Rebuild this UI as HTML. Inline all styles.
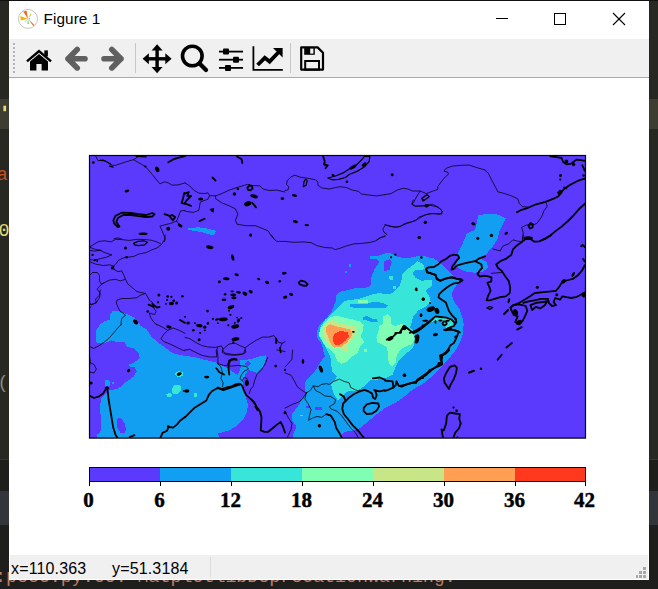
<!DOCTYPE html>
<html>
<head>
<meta charset="utf-8">
<title>Figure 1</title>
<style>
html,body{margin:0;padding:0;}
body{width:658px;height:589px;overflow:hidden;background:#272822;position:relative;font-family:"Liberation Sans",sans-serif;}
.abs{position:absolute;}
#bgl,#bgr{position:absolute;top:0;height:589px;}
#win{position:absolute;left:9px;top:1px;width:640px;height:579px;background:#fff;overflow:hidden;}
#title{position:absolute;left:34.5px;top:6px;font-size:15.3px;line-height:24px;color:#000;letter-spacing:0.1px;white-space:nowrap;}
#toolbar{position:absolute;left:0;top:38px;width:640px;height:38px;background:#f0f0f0;border-bottom:1px solid #a9a9a9;}
#status{position:absolute;left:1px;top:554px;width:638px;height:24px;background:#f0f0f0;}
#status span{position:absolute;top:4px;font-size:16px;letter-spacing:0.15px;line-height:20px;color:#000;white-space:nowrap;}
.edtxt{position:absolute;font-family:"Liberation Mono",monospace;font-size:20px;line-height:20px;white-space:nowrap;}
.cbl{font-family:"Liberation Serif",serif;font-weight:bold;font-size:21px;fill:#000;text-anchor:middle;stroke:#000;stroke-width:0.45px;}
</style>
</head>
<body>
<!-- editor background behind the window -->
<div class="abs" style="left:0;top:0;width:658px;height:1px;background:#111;"></div>
<div class="abs" style="left:0;top:99px;width:658px;height:30px;background:#3e3d32;"></div>
<div class="abs" style="left:0;top:459px;width:658px;height:32px;background:#1e1f1c;border-top:1px solid #34353a;"></div>
<div class="abs" style="left:0;top:491px;width:658px;height:34px;background:#34353a;"></div>
<div class="abs" style="left:0;top:525px;width:658px;height:64px;background:#1e1f1c;"></div>
<svg class="abs" style="left:0;top:0" width="658" height="589" viewBox="0 0 658 589">
  <rect x="3.4" y="105.7" width="2.7" height="5.5" fill="#e6db74"/>
  <g font-family="'Liberation Mono',monospace" font-size="18.3px">
    <text x="-3.2" y="179.8" fill="#c8511f">a</text>
    <text x="-1.5" y="235.5" fill="#e6db74">0</text>
    <text x="-2.5" y="388" fill="#8a8a80">(</text>
    <text x="-5" y="582.2" fill="#be7d69">:pecc.py:60: MatplotlibDeprecationWarning:</text>
  </g>
</svg>
<div id="win">
  <!-- title bar -->
  <svg class="abs" style="left:9px;top:8px" width="20" height="20" viewBox="0 0 20 20">
    <circle cx="10" cy="9.9" r="9.5" fill="#fff" stroke="#bdbdbd" stroke-width="0.9"/>
    <path d="M10 10 L5.2 2.6 L8.6 1.8 Z" fill="#f26a1b"/>
    <path d="M10 10 L2.4 7 L2.8 11.4 Z" fill="#f7b500"/>
    <path d="M10 10 L16.5 16 L15.3 17 Z" fill="#ee6a1c"/>
    <path d="M10 10 L12.5 4.5 L13.7 5.3 Z" fill="#b5d33a"/>
    <path d="M10 10 L9.2 15 L11 15 Z" fill="#7edc6e"/>
    <path d="M10 10 L6.5 12.5 L7.2 13.2 Z" fill="#8fd6d0"/>
    <path d="M10 10 L12 9.3 L12 10.3 Z" fill="#4a78c8"/>
  </svg>
  <div id="title">Figure 1</div>
  <svg class="abs" style="left:480px;top:0" width="160" height="38" viewBox="0 0 160 38">
    <g stroke="#000" stroke-width="1" fill="none" shape-rendering="crispEdges">
      <line x1="7" y1="17.5" x2="19" y2="17.5"/>
      <rect x="65.5" y="12.5" width="11" height="11"/>
    </g>
    <g stroke="#000" stroke-width="1.1" fill="none">
      <line x1="124" y1="12" x2="136" y2="24"/>
      <line x1="136" y1="12" x2="124" y2="24"/>
    </g>
  </svg>

  <!-- toolbar -->
  <div id="toolbar">
    <svg class="abs" style="left:0;top:0" width="640" height="38" viewBox="0 0 640 38">
      <!-- handle -->
      <g fill="#b4b4b4">
        <rect x="4" y="4" width="2" height="2"/><rect x="4" y="8" width="2" height="2"/><rect x="4" y="12" width="2" height="2"/><rect x="4" y="16" width="2" height="2"/><rect x="4" y="20" width="2" height="2"/><rect x="4" y="24" width="2" height="2"/><rect x="4" y="28" width="2" height="2"/><rect x="4" y="32" width="2" height="2"/>
      </g>
      <!-- home -->
      <g fill="#000">
        <path d="M17.2 21.5 L30 10.6 L42.8 21.5 L41.3 23.2 L30 13.8 L18.7 23.2 Z"/>
        <path d="M21 22.5 L30 15 L39 22.5 V31.5 H32.6 V25 H27.4 V31.5 H21 Z"/>
        <rect x="35.3" y="11.4" width="3.6" height="6"/>
      </g>
      <!-- back / forward -->
      <g stroke="#606060" stroke-width="5.6" stroke-linecap="round" stroke-linejoin="round" fill="none">
        <path d="M76 19.7 H59 M68.2 10.5 L59 19.7 L68.2 28.9"/>
        <path d="M95 19.7 H112 M102.8 10.5 L112 19.7 L102.8 28.9"/>
      </g>
      <!-- separators -->
      <rect x="126" y="4" width="1" height="30" fill="#c6c6c6"/>
      <rect x="281" y="4" width="1" height="30" fill="#c6c6c6"/>
      <!-- move -->
      <g fill="#000">
        <rect x="146.4" y="10" width="3.4" height="20"/>
        <rect x="138" y="18.1" width="20" height="3.4"/>
        <path d="M148.1 5.3 L153.6 11.6 H142.6 Z"/>
        <path d="M148.1 34.3 L153.6 28 H142.6 Z"/>
        <path d="M133.6 19.8 L139.9 14.3 V25.3 Z"/>
        <path d="M162.6 19.8 L156.3 14.3 V25.3 Z"/>
      </g>
      <!-- zoom -->
      <g stroke="#000" fill="none">
        <circle cx="183.3" cy="17" r="9.8" stroke-width="3.6"/>
        <path d="M190.5 24.5 L197 31" stroke-width="4.2" stroke-linecap="round"/>
      </g>
      <!-- sliders -->
      <g fill="#000">
        <rect x="210" y="11.7" width="24" height="1.8"/>
        <rect x="210" y="19.8" width="24" height="1.8"/>
        <rect x="210" y="28" width="24" height="1.8"/>
        <rect x="214" y="9.6" width="6" height="6" rx="1"/>
        <rect x="224" y="17.7" width="6" height="6" rx="1"/>
        <rect x="216" y="25.9" width="6" height="6" rx="1"/>
      </g>
      <!-- chart -->
      <g>
        <path d="M244.4 7.3 V30.8 H273.8" stroke="#000" stroke-width="1.8" fill="none"/>
        <path d="M248.6 26 L255.8 18.8 L260.6 22.6 L269.5 13.2" stroke="#000" stroke-width="3.8" fill="none"/>
        <path d="M264 9 H273.6 V18.6 Z" fill="#000"/>
      </g>
      <!-- save -->
      <g>
        <path d="M292.2 8.4 H308.6 L314 13.8 V30.6 H292.2 Z" fill="none" stroke="#000" stroke-width="2.2" stroke-linejoin="round"/>
        <rect x="295.2" y="8.4" width="10.6" height="7.4" fill="#000"/>
        <rect x="301.2" y="9.6" width="3.2" height="5" fill="#f0f0f0"/>
        <rect x="296.2" y="22" width="13.8" height="8.6" fill="none" stroke="#000" stroke-width="2"/>
      </g>
    </svg>
  </div>

  <!-- figure canvas -->
  <svg id="fig" class="abs" style="left:0;top:77px" width="640" height="477" viewBox="9 78 640 477">
    <defs><clipPath id="axclip"><rect x="89.5" y="155.5" width="496" height="282.6"/></clipPath></defs>
    <rect x="89.5" y="155.5" width="496" height="282.6" fill="#5b39fd"/>
    <g id="map" clip-path="url(#axclip)">
    <g shape-rendering="crispEdges">
<polygon fill="#129ff1" points="95.9,342.4 96.4,330.3 99.4,325.3 104.0,321.2 110.1,319.6 110.1,315.1 113.1,310.5 119.2,311.3 127.6,314.3 135.2,318.1 140.5,325.7 146.6,329.5 151.9,337.1 157.9,342.4 165.5,347.8 172.4,353.1 185.0,356.1 194.1,356.9 204.8,359.9 215.4,362.2 221.7,365.3 228.0,368.5 237.8,375.2 240.8,367.5 240.0,359.5 246.2,359.9 253.8,358.4 261.5,355.8 265.7,355.4 266.0,359.2 263.7,365.3 260.7,369.1 256.9,372.9 252.3,371.4 248.5,369.9 245.5,374.0 243.5,380.6 242.8,388.2 245.4,395.9 247.7,403.5 247.4,411.2 243.9,418.8 237.0,425.7 229.3,430.3 221.7,432.6 217.4,432.9 220.9,439.0 96.9,439.0 97.2,434.5 100.2,433.0 101.0,426.9 100.2,405.6 101.0,398.0 109.3,390.4 113.1,389.6 117.7,388.9 126.0,382.0 133.6,376.7 136.7,371.4 135.0,367.5 130.0,367.0 129.0,364.5 133.0,363.0 137.4,360.0 139.7,357.6 139.0,353.8 133.6,348.5 126.0,346.2 125.3,342.4 117.7,342.4 111.6,340.2 104.8,343.2"/>
<polygon fill="#5b39fd" points="116.5,420.0 119.0,417.8 122.0,419.0 125.0,424.0 126.0,430.0 124.0,433.5 120.5,433.0 117.5,428.0"/>
<polygon fill="#5b39fd" points="244.3,363.8 247.7,360.7 251.0,363.8 247.7,366.8"/>
<polygon fill="#129ff1" points="104.8,380.0 109.0,379.8 110.0,383.0 109.5,385.8 105.0,385.8"/>
<polygon fill="#129ff1" points="112.0,382.0 113.5,382.0 113.5,384.0 112.0,384.0"/>
<polygon fill="#37e6d8" points="173.0,386.0 177.0,384.3 181.0,386.0 181.5,390.0 178.0,394.0 173.5,394.2 171.6,391.0"/>
<polygon fill="#37e6d8" points="166.3,394.5 170.0,392.7 172.4,394.5 170.5,397.2 167.0,397.2"/>
<polygon fill="#37e6d8" points="175.4,373.0 179.0,371.0 183.0,372.5 182.5,376.0 178.5,377.0 175.6,376.0"/>
<polygon fill="#37e6d8" points="194.0,393.0 196.5,393.0 197.0,397.0 194.5,397.2"/>
<polygon fill="#129ff1" points="186.0,228.7 198.2,227.2 205.9,228.3 215.8,230.6 215.0,234.4 211.2,234.9 201.3,232.1 190.6,230.3"/>
<polygon fill="#129ff1" points="478.3,215.3 488.2,213.5 495.9,213.8 505.8,218.3 502.8,224.5 499.7,230.6 497.4,239.8 492.0,247.4 486.7,253.5 480.6,258.9 486.7,261.9 488.2,267.3 482.9,271.9 474.5,272.6 466.8,271.9 459.2,268.8 455.4,264.2 459.2,258.9 457.6,253.5 461.5,245.9 466.8,233.6 475.2,229.8 476.8,222.9"/>
<polygon fill="#129ff1" points="292.6,439.0 293.4,434.1 296.5,426.5 291.9,420.3 291.9,414.2 298.8,405.0 304.9,394.3 305.6,380.6 314.1,372.9 319.4,363.8 324.8,356.1 323.2,351.5 322.5,346.9 320.9,342.3 317.9,339.2 316.8,334.6 317.4,330.0 319.4,325.5 323.2,320.9 327.8,316.3 331.6,311.7 333.9,305.6 336.2,300.2 335.7,296.4 339.5,291.8 348.9,289.9 356.6,287.8 364.3,288.2 370.4,286.0 371.7,276.0 374.9,268.5 379.5,261.6 376.5,259.3 369.6,258.6 369.6,255.5 379.5,255.5 385.6,253.2 391.1,253.5 398.8,257.3 407.9,258.1 415.6,256.6 423.2,255.8 429.3,257.5 433.4,258.2 440.7,263.1 448.0,270.4 454.0,276.5 461.3,278.9 456.5,285.0 452.8,291.0 451.5,294.9 454.6,302.5 459.2,308.6 462.2,316.3 463.7,323.9 463.0,333.1 460.7,340.7 456.9,348.4 452.3,354.5 446.9,360.6 441.6,366.8 432.4,376.0 423.2,383.6 412.5,389.8 403.3,397.4 394.2,403.5 385.0,408.0 376.7,414.2 367.6,421.9 359.9,428.0 352.3,431.0 344.6,431.8 341.6,434.9 340.0,439.0"/>
<polygon fill="#5b39fd" points="384.0,261.0 390.0,259.0 391.7,262.0 389.5,270.0 384.2,271.0 383.5,266.0"/>
<polygon fill="#5b39fd" points="314.8,407.3 321.7,407.3 321.7,409.6 314.8,409.6"/>
<polygon fill="#5b39fd" points="306.4,405.8 309.5,405.8 309.5,408.1 306.4,408.1"/>
<polygon fill="#129ff1" points="348.7,263.5 350.7,263.5 350.7,267.0 348.7,267.0"/>
<polygon fill="#129ff1" points="345.0,271.0 347.0,271.0 347.0,273.0 345.0,273.0"/>
<polygon fill="#37e6d8" points="331.0,365.0 330.5,357.6 328.0,351.5 323.6,343.8 318.8,336.2 320.4,327.0 324.8,320.1 330.9,314.8 333.9,311.7 339.3,306.3 344.0,301.0 351.2,299.9 361.2,298.3 371.9,294.5 379.5,293.0 385.6,294.5 392.6,293.3 398.8,287.2 401.4,281.5 401.8,274.9 407.9,268.8 414.0,264.2 417.9,261.2 423.2,264.2 424.8,268.8 421.7,270.3 415.6,269.6 412.5,273.4 415.6,278.0 421.7,281.0 427.8,279.5 432.4,280.5 432.5,285.6 425.5,290.3 429.3,296.4 430.9,302.5 426.3,306.3 418.6,310.2 413.3,316.3 411.8,322.4 410.0,327.0 414.5,333.1 415.6,340.7 412.5,348.4 404.9,354.5 399.5,359.5 397.0,364.0 395.7,366.8 392.6,374.5 385.0,378.3 376.7,379.8 370.6,379.8 364.5,385.9 356.9,391.3 349.2,390.5 343.9,394.3 337.8,400.5 333.9,394.3 330.9,384.4 337.0,376.8 332.4,371.4"/>
<polygon fill="#37e6d8" points="388.7,276.0 393.3,276.0 393.3,279.0 388.7,279.0"/>
<polygon fill="#37e6d8" points="393.0,286.0 396.0,286.0 396.0,289.0 393.0,289.0"/>
<polygon fill="#37e6d8" points="390.0,276.5 393.0,276.5 393.0,279.5 390.0,279.5"/>
<polygon fill="#37e6d8" points="421.7,326.2 430.9,319.3 435.5,315.5 443.1,317.0 452.3,320.9 453.0,325.5 446.2,327.8 441.6,320.9 433.9,320.9 423.2,327.8"/>
<polygon fill="#37e6d8" points="300.0,414.5 303.0,414.5 303.0,416.0 300.0,416.0"/>
<polygon fill="#129ff1" points="350.0,303.6 358.0,304.3 367.7,303.6 374.4,301.5 382.6,302.9 388.0,305.6 385.3,307.7 377.2,308.3 367.7,307.7 358.0,308.3 350.0,307.0"/>
<polygon fill="#129ff1" points="362.9,317.8 366.3,315.8 371.7,318.5 377.2,319.2 377.8,321.9 373.8,322.6 367.7,320.6 363.6,319.9"/>
<polygon fill="#80ffb4" points="318.9,334.6 320.9,327.8 325.5,321.6 330.9,317.0 337.0,315.5 344.6,317.8 352.3,319.3 359.9,321.6 363.7,324.7 363.0,330.8 360.7,336.2 364.5,342.3 360.7,345.3 357.6,353.0 350.7,357.6 346.2,362.2 341.6,363.7 337.0,360.6 334.7,354.5 330.9,349.9 325.5,346.1 322.5,340.7"/>
<polygon fill="#80ffb4" points="382.6,316.5 387.4,314.4 390.7,317.2 391.4,324.0 395.5,326.0 401.6,324.0 405.0,325.3 409.8,330.7 413.8,334.8 414.5,340.3 411.1,344.3 404.3,347.0 400.3,349.8 396.9,355.2 395.5,363.3 392.1,366.1 388.7,363.3 388.0,353.8 386.7,347.0 381.9,344.3 377.2,342.3 376.5,337.5 378.5,330.7 379.2,326.0 383.3,324.0"/>
<polygon fill="#80ffb4" points="358.0,300.2 367.7,300.2 367.7,302.9 358.0,302.9"/>
<polygon fill="#80ffb4" points="364.0,348.7 367.0,348.7 367.0,351.7 364.0,351.7"/>
<polygon fill="#c8e688" points="322.5,327.0 327.8,322.4 332.4,320.1 337.0,322.4 346.2,324.7 354.6,326.2 356.9,330.8 355.3,334.6 352.3,339.2 347.7,345.3 347.7,350.7 343.9,351.5 340.8,348.4 333.2,348.4 329.3,344.6 325.5,339.2 322.5,333.1"/>
<polygon fill="#ff9f54" points="326.3,327.0 330.1,324.2 335.5,326.2 343.1,327.8 350.0,329.3 352.3,333.9 350.7,337.7 346.9,342.3 341.6,346.9 333.9,347.6 330.1,343.0 327.8,336.2 326.0,331.6"/>
<polygon fill="#ff391d" points="333.2,336.2 335.5,333.1 340.8,330.8 347.7,332.3 348.9,336.2 345.4,340.7 340.0,344.6 334.7,344.6 333.2,340.7"/>
</g>
    <path d="M95.7 156.1 L98.0 160.7 L103.3 159.9 L107.9 162.2 L111.8 165.3 L115.6 165.3 L124.8 162.2 L133.9 159.5 L137.8 156.9 L137.0 155.4" fill="none" stroke="#000" stroke-width="0.75" stroke-linejoin="round" stroke-linecap="round"/>
<path d="M100.3 160.4 L104.1 160.7 L107.9 162.5 L111.0 164.5" fill="none" stroke="#000" stroke-width="1.20" stroke-linejoin="round" stroke-linecap="round"/>
<path d="M109.5 166.1 L113.3 167.1" fill="none" stroke="#000" stroke-width="1.20" stroke-linejoin="round" stroke-linecap="round"/>
<path d="M136.2 156.4 L146.2 156.9" fill="none" stroke="#000" stroke-width="1.20" stroke-linejoin="round" stroke-linecap="round"/>
<path d="M133.9 159.9 L145.4 166.5 L152.3 174.5 L159.9 183.9 L164.5 181.8 L168.3 182.9 L172.2 185.2 L178.3 184.9 L185.0 182.9" fill="none" stroke="#000" stroke-width="0.75" stroke-linejoin="round" stroke-linecap="round"/>
<path d="M185.0 210.4 L180.6 210.9 L176.7 221.1 L179.8 224.9" fill="none" stroke="#000" stroke-width="0.75" stroke-linejoin="round" stroke-linecap="round"/>
<path d="M176.7 221.1 L170.6 223.4 L164.5 224.9 L159.9 226.1 L162.2 231.0 L165.3 238.7 L164.5 241.7" fill="none" stroke="#000" stroke-width="0.75" stroke-linejoin="round" stroke-linecap="round"/>
<ellipse cx="157.2" cy="169.4" rx="2.0" ry="2.9" fill="#000" transform="rotate(-25 157.2 169.4)"/>
<ellipse cx="145.4" cy="166.5" rx="1.1" ry="1.1" fill="#000" transform="rotate(0 145.4 166.5)"/>
<path d="M168.3 162.2 L173.7 159.2 L179.8 157.3 L185.0 156.1" fill="none" stroke="#000" stroke-width="1.80" stroke-linejoin="round" stroke-linecap="round"/>
<ellipse cx="127.0" cy="191.0" rx="2.4" ry="1.3" fill="#000" transform="rotate(-15 127.0 191.0)"/>
<ellipse cx="93.4" cy="162.5" rx="1.3" ry="1.3" fill="#000" transform="rotate(0 93.4 162.5)"/>
<ellipse cx="143.1" cy="233.8" rx="4.6" ry="1.3" fill="#000" transform="rotate(0 143.1 233.8)"/>
<ellipse cx="168.3" cy="228.7" rx="2.0" ry="2.0" fill="#000" transform="rotate(0 168.3 228.7)"/>
<path d="M164.5 214.2 L169.1 215.7 L172.9 220.3 L175.2 217.3 L172.2 215.0 L169.4 216.1" fill="none" stroke="#000" stroke-width="1.80" stroke-linejoin="round" stroke-linecap="round"/>
<path d="M184.4 192.8 L182.9 198.9 L181.6 203.2 L185.0 203.8" fill="none" stroke="#000" stroke-width="1.80" stroke-linejoin="round" stroke-linecap="round"/>
<ellipse cx="180.1" cy="225.5" rx="2.6" ry="1.5" fill="#000" transform="rotate(30 180.1 225.5)"/>
<path d="M113.3 220.3 L115.6 215.7 L121.7 212.7 L130.9 213.0 L138.5 214.2 L146.2 215.0 L152.3 213.0 L154.6 214.2 L152.3 216.5 L146.2 217.0 L138.5 216.1 L130.9 215.0 L123.2 215.0 L117.9 218.0 L116.3 221.9 L119.4 226.5 L117.9 227.2 L114.1 223.4 L113.3 220.3" fill="none" stroke="#000" stroke-width="1.80" stroke-linejoin="round" stroke-linecap="round"/>
<path d="M114.1 238.7 L117.9 237.9 L121.7 239.1" fill="none" stroke="#000" stroke-width="0.75" stroke-linejoin="round" stroke-linecap="round"/>
<path d="M185.0 182.9 L189.6 185.9 L194.2 190.5 L198.8 193.1 L204.9 193.6 L207.9 192.8 L209.5 195.6 L215.6 195.9 L221.7 193.6 L229.3 190.1 L237.0 187.5 L244.6 185.2 L247.7 184.4 L252.3 185.5 L259.9 185.9 L263.0 189.0 L269.1 190.5 L276.7 190.1 L285.0 192.0" fill="none" stroke="#000" stroke-width="0.75" stroke-linejoin="round" stroke-linecap="round"/>
<path d="M215.6 195.9 L215.6 198.6 L221.7 202.8 L229.3 205.8 L235.5 208.9 L237.8 214.2 L235.5 220.3 L237.0 224.2 L246.2 225.7 L255.3 225.7 L263.0 228.7 L268.3 231.0 L270.6 234.9 L275.2 240.1" fill="none" stroke="#000" stroke-width="0.75" stroke-linejoin="round" stroke-linecap="round"/>
<path d="M185.0 211.2 L193.4 212.4 L198.8 210.4 L200.3 202.0 L207.9 199.2 L209.5 195.6" fill="none" stroke="#000" stroke-width="0.75" stroke-linejoin="round" stroke-linecap="round"/>
<path d="M237.0 156.4 L241.6 159.2 L242.3 163.0" fill="none" stroke="#000" stroke-width="1.80" stroke-linejoin="round" stroke-linecap="round"/>
<path d="M212.5 177.5 L215.6 180.6" fill="none" stroke="#000" stroke-width="1.80" stroke-linejoin="round" stroke-linecap="round"/>
<path d="M247.4 187.9 L249.2 185.5 L252.0 185.9 L252.6 188.5 L250.4 190.4 L248.0 189.8 L247.4 187.9" fill="none" stroke="#000" stroke-width="1.80" stroke-linejoin="round" stroke-linecap="round"/>
<ellipse cx="237.8" cy="189.0" rx="1.3" ry="1.3" fill="#000" transform="rotate(0 237.8 189.0)"/>
<ellipse cx="234.4" cy="194.0" rx="1.7" ry="1.7" fill="#000" transform="rotate(0 234.4 194.0)"/>
<ellipse cx="254.1" cy="196.3" rx="4.0" ry="1.8" fill="#000" transform="rotate(15 254.1 196.3)"/>
<ellipse cx="247.7" cy="203.8" rx="3.7" ry="2.4" fill="#000" transform="rotate(-20 247.7 203.8)"/>
<path d="M252.3 202.8 L256.1 207.3" fill="none" stroke="#000" stroke-width="1.80" stroke-linejoin="round" stroke-linecap="round"/>
<ellipse cx="282.4" cy="198.6" rx="1.8" ry="1.3" fill="#000" transform="rotate(0 282.4 198.6)"/>
<ellipse cx="200.7" cy="198.9" rx="2.6" ry="1.5" fill="#000" transform="rotate(0 200.7 198.9)"/>
<path d="M185.0 193.6 L188.8 192.0 L187.3 195.9 L191.1 195.9 L186.5 200.5 L185.0 202.8" fill="none" stroke="#000" stroke-width="1.80" stroke-linejoin="round" stroke-linecap="round"/>
<path d="M185.0 203.5 L191.1 205.8" fill="none" stroke="#000" stroke-width="1.80" stroke-linejoin="round" stroke-linecap="round"/>
<polygon points="209.5,208.9 214.1,208.1 213.7,212.7 211.0,211.2" fill="#000"/>
<path d="M199.5 221.1 L204.6 218.8" fill="none" stroke="#000" stroke-width="1.80" stroke-linejoin="round" stroke-linecap="round"/>
<ellipse cx="250.7" cy="234.9" rx="1.5" ry="1.5" fill="#000" transform="rotate(0 250.7 234.9)"/>
<path d="M285.0 190.5 L288.1 189.8 L288.8 186.7 L286.5 184.4 L287.3 180.6 L291.1 176.8 L294.9 175.2 L300.3 177.2 L307.9 178.3 L315.6 179.8 L317.9 182.1 L317.9 185.2 L321.7 187.9 L329.3 189.0 L335.5 187.5 L340.0 186.7 L346.2 187.5 L352.3 190.1 L358.4 191.3 L361.5 194.0 L369.1 195.1 L376.7 195.9 L385.0 194.6" fill="none" stroke="#000" stroke-width="0.75" stroke-linejoin="round" stroke-linecap="round"/>
<path d="M327.8 178.0 L335.5 176.0 L343.1 172.9 L349.2 169.1 L356.9 164.5 L361.5 159.9 L364.5 156.4 L369.9 156.4 L369.1 161.5 L364.5 166.8 L356.9 171.4 L349.2 174.5 L345.4 177.5 L338.5 179.4 L332.4 179.8 L327.8 178.0" fill="none" stroke="#000" stroke-width="1.20" stroke-linejoin="round" stroke-linecap="round"/>
<ellipse cx="353.0" cy="167.1" rx="4.0" ry="1.7" fill="#000" transform="rotate(-30 353.0 167.1)"/>
<ellipse cx="364.1" cy="164.5" rx="2.9" ry="1.5" fill="#000" transform="rotate(-40 364.1 164.5)"/>
<ellipse cx="333.2" cy="175.2" rx="1.8" ry="1.1" fill="#000" transform="rotate(30 333.2 175.2)"/>
<path d="M303.3 186.7 L304.1 181.3 L305.6 179.1 L307.2 180.6 L306.1 185.2 L303.3 186.7" fill="none" stroke="#000" stroke-width="1.20" stroke-linejoin="round" stroke-linecap="round"/>
<path d="M323.2 156.4 L324.8 161.5 L324.0 164.5 L327.8 165.3 L325.5 168.3" fill="none" stroke="#000" stroke-width="1.80" stroke-linejoin="round" stroke-linecap="round"/>
<ellipse cx="346.9" cy="181.8" rx="1.3" ry="1.3" fill="#000" transform="rotate(0 346.9 181.8)"/>
<ellipse cx="294.5" cy="195.6" rx="2.6" ry="1.3" fill="#000" transform="rotate(15 294.5 195.6)"/>
<ellipse cx="295.4" cy="221.6" rx="2.6" ry="1.5" fill="#000" transform="rotate(15 295.4 221.6)"/>
<ellipse cx="306.7" cy="225.2" rx="2.2" ry="1.1" fill="#000" transform="rotate(0 306.7 225.2)"/>
<path d="M376.7 240.1 L379.8 237.9 L385.0 236.4" fill="none" stroke="#000" stroke-width="0.75" stroke-linejoin="round" stroke-linecap="round"/>
<path d="M385.0 225.7 L382.9 228.7 L383.6 231.8 L385.0 232.6" fill="none" stroke="#000" stroke-width="0.75" stroke-linejoin="round" stroke-linecap="round"/>
<path d="M385.0 194.6 L391.1 193.6 L397.2 190.1 L403.3 188.2 L407.9 189.0 L412.5 191.0 L420.2 191.0 L426.3 193.6 L432.4 191.3 L437.8 189.4 L437.8 186.7 L441.6 181.3 L445.4 176.8 L448.5 174.2 L447.7 172.2 L443.9 171.1 L446.2 168.3 L452.3 166.1 L461.5 165.3 L469.1 165.0 L476.7 167.6 L485.0 169.9" fill="none" stroke="#000" stroke-width="0.75" stroke-linejoin="round" stroke-linecap="round"/>
<path d="M420.2 191.0 L417.1 195.9 L413.3 202.8 L411.8 204.3 L414.8 206.3 L421.7 205.8 L426.3 205.0 L432.4 204.3 L438.5 207.3 L442.3 211.2 L441.6 214.2 L437.0 213.9 L430.9 213.5 L424.8 215.0 L418.6 217.3 L415.6 220.3 L409.5 222.6 L404.9 223.4 L400.3 226.5 L394.2 227.2 L385.0 225.2" fill="none" stroke="#000" stroke-width="0.75" stroke-linejoin="round" stroke-linecap="round"/>
<path d="M421.7 198.6 L427.0 194.6 L429.3 196.6 L424.0 200.5 L421.7 198.6" fill="none" stroke="#000" stroke-width="1.20" stroke-linejoin="round" stroke-linecap="round"/>
<ellipse cx="426.6" cy="205.8" rx="2.2" ry="1.5" fill="#000" transform="rotate(0 426.6 205.8)"/>
<ellipse cx="392.2" cy="174.8" rx="1.5" ry="1.5" fill="#000" transform="rotate(0 392.2 174.8)"/>
<ellipse cx="425.5" cy="222.2" rx="1.5" ry="1.5" fill="#000" transform="rotate(0 425.5 222.2)"/>
<ellipse cx="419.4" cy="237.6" rx="1.5" ry="1.5" fill="#000" transform="rotate(0 419.4 237.6)"/>
<ellipse cx="473.4" cy="223.9" rx="2.2" ry="1.3" fill="#000" transform="rotate(15 473.4 223.9)"/>
<ellipse cx="477.8" cy="238.4" rx="1.0" ry="0.9" fill="#000" transform="rotate(0 477.8 238.4)"/>
<path d="M385.0 233.3 L386.5 234.1" fill="none" stroke="#000" stroke-width="0.75" stroke-linejoin="round" stroke-linecap="round"/>
<path d="M485.0 170.4 L488.2 173.1 L492.2 181.1 L496.2 188.3 L497.8 191.8 L504.1 193.4 L510.5 195.5 L517.7 198.7 L519.3 203.5 L522.5 206.6 L528.1 207.1" fill="none" stroke="#000" stroke-width="0.75" stroke-linejoin="round" stroke-linecap="round"/>
<path d="M516.9 212.2 L521.7 209.8 L528.1 207.8 L536.1 204.3 L545.6 201.9 L553.6 198.7 L558.4 196.3 L560.8 192.3 L564.8 188.3 L571.2 184.3 L579.1 180.3 L585.2 178.4" fill="none" stroke="#000" stroke-width="1.80" stroke-linejoin="round" stroke-linecap="round"/>
<path d="M558.1 192.8 L560.0 190.7 L561.9 191.8 L560.3 194.4 L558.1 192.8" fill="none" stroke="#000" stroke-width="1.80" stroke-linejoin="round" stroke-linecap="round"/>
<path d="M564.0 187.5 L566.4 188.3" fill="none" stroke="#000" stroke-width="1.80" stroke-linejoin="round" stroke-linecap="round"/>
<path d="M546.4 203.5 L547.2 206.6 L544.0 210.6 L541.6 217.0 L536.9 223.4 L532.9 225.0 L526.5 225.0 L521.7 227.4 L523.3 233.0 L522.5 240.0" fill="none" stroke="#000" stroke-width="0.75" stroke-linejoin="round" stroke-linecap="round"/>
<path d="M528.4 225.8 L530.5 223.1 L532.9 224.2 L532.6 227.4 L530.0 228.5 L528.4 225.8" fill="none" stroke="#000" stroke-width="1.80" stroke-linejoin="round" stroke-linecap="round"/>
<path d="M585.2 203.5 L579.1 209.0 L573.6 215.4 L568.0 221.0 L561.6 226.6 L555.2 231.4 L550.4 235.4 L545.6 238.6 L542.4 240.0" fill="none" stroke="#000" stroke-width="1.80" stroke-linejoin="round" stroke-linecap="round"/>
<path d="M550.4 156.4 L556.8 157.2 L561.6 158.0 L563.2 162.0 L566.4 164.4 L571.2 163.6 L574.4 161.2 L576.8 159.6 L585.2 160.9" fill="none" stroke="#000" stroke-width="1.80" stroke-linejoin="round" stroke-linecap="round"/>
<ellipse cx="566.4" cy="161.5" rx="1.9" ry="1.9" fill="#000" transform="rotate(0 566.4 161.5)"/>
<ellipse cx="573.6" cy="164.4" rx="1.7" ry="1.7" fill="#000" transform="rotate(0 573.6 164.4)"/>
<path d="M582.3 165.2 L584.7 170.7" fill="none" stroke="#000" stroke-width="1.80" stroke-linejoin="round" stroke-linecap="round"/>
<ellipse cx="583.6" cy="175.5" rx="1.3" ry="1.3" fill="#000" transform="rotate(0 583.6 175.5)"/>
<ellipse cx="560.5" cy="175.5" rx="1.5" ry="1.5" fill="#000" transform="rotate(0 560.5 175.5)"/>
<ellipse cx="560.3" cy="179.5" rx="1.1" ry="1.1" fill="#000" transform="rotate(0 560.3 179.5)"/>
<ellipse cx="491.4" cy="235.4" rx="1.7" ry="1.7" fill="#000" transform="rotate(0 491.4 235.4)"/>
<ellipse cx="506.2" cy="233.3" rx="1.9" ry="1.3" fill="#000" transform="rotate(-30 506.2 233.3)"/>
<ellipse cx="528.1" cy="238.1" rx="4.8" ry="1.9" fill="#000" transform="rotate(0 528.1 238.1)"/>
<path d="M89.6 247.2 L94.2 244.2 L98.8 241.4 L104.9 240.8 L111.0 241.9 L115.6 239.3 L121.7 239.6 L129.3 240.4 L137.0 239.3 L146.2 239.6 L152.3 240.4 L158.4 242.6 L161.5 244.5 L164.5 239.6 L165.3 235.0" fill="none" stroke="#000" stroke-width="0.75" stroke-linejoin="round" stroke-linecap="round"/>
<path d="M133.6 243.4 L137.8 241.4 L143.9 240.8 L147.4 242.3 L144.6 244.9 L138.5 245.7 L134.7 244.9 L133.6 243.4" fill="none" stroke="#000" stroke-width="1.20" stroke-linejoin="round" stroke-linecap="round"/>
<path d="M161.5 244.5 L156.9 248.0 L150.7 250.3 L146.2 252.6 L138.5 254.1 L133.9 256.4 L127.8 257.2 L123.2 257.9 L118.6 260.2 L116.3 263.3 L113.3 266.3 L114.1 269.4" fill="none" stroke="#000" stroke-width="0.75" stroke-linejoin="round" stroke-linecap="round"/>
<path d="M89.6 250.3 L94.2 251.1 L100.3 250.3 L104.9 252.6 L111.8 254.9 L106.4 257.2 L100.3 258.7 L94.2 260.2 L89.6 259.5" fill="none" stroke="#000" stroke-width="0.75" stroke-linejoin="round" stroke-linecap="round"/>
<path d="M89.6 247.2 L95.7 249.5 L101.1 250.3" fill="none" stroke="#000" stroke-width="0.75" stroke-linejoin="round" stroke-linecap="round"/>
<path d="M89.6 261.8 L95.7 264.1 L103.3 265.6 L109.5 264.8 L114.1 266.3" fill="none" stroke="#000" stroke-width="0.75" stroke-linejoin="round" stroke-linecap="round"/>
<ellipse cx="92.6" cy="254.9" rx="1.1" ry="1.1" fill="#000" transform="rotate(0 92.6 254.9)"/>
<ellipse cx="94.9" cy="260.2" rx="1.1" ry="1.1" fill="#000" transform="rotate(0 94.9 260.2)"/>
<ellipse cx="97.2" cy="261.0" rx="1.0" ry="0.9" fill="#000" transform="rotate(0 97.2 261.0)"/>
<ellipse cx="125.5" cy="248.0" rx="1.5" ry="1.5" fill="#000" transform="rotate(0 125.5 248.0)"/>
<ellipse cx="126.6" cy="257.2" rx="1.3" ry="1.3" fill="#000" transform="rotate(0 126.6 257.2)"/>
<ellipse cx="112.5" cy="267.9" rx="1.7" ry="1.7" fill="#000" transform="rotate(0 112.5 267.9)"/>
<path d="M114.1 269.4 L117.9 271.7 L121.7 270.9 L124.0 275.5 L125.5 279.3 L120.2 280.9 L115.6 279.3 L109.5 280.1 L103.3 283.2 L99.5 286.2 L97.2 289.3 L100.3 293.1 L99.5 297.7 L96.5 302.3 L91.9 304.6 L89.6 303.8" fill="none" stroke="#000" stroke-width="0.75" stroke-linejoin="round" stroke-linecap="round"/>
<path d="M89.6 275.5 L92.6 272.5 L97.2 272.5 L99.5 275.5 L99.5 280.9 L101.1 283.9 L103.3 283.2" fill="none" stroke="#000" stroke-width="0.75" stroke-linejoin="round" stroke-linecap="round"/>
<path d="M125.5 279.3 L127.8 283.9 L132.4 287.8 L137.0 291.6 L145.4 293.4 L147.7 296.9 L149.2 300.0 L152.3 302.3 L153.0 306.9 L156.1 311.5 L154.6 314.5 L149.2 313.0 L150.7 317.6 L153.8 322.2 L156.9 325.1" fill="none" stroke="#000" stroke-width="0.75" stroke-linejoin="round" stroke-linecap="round"/>
<path d="M145.4 293.4 L140.0 295.4 L137.0 297.7 L129.3 298.5 L121.7 298.5 L117.1 300.0 L116.3 303.0 L117.9 306.9 L120.2 311.5 L123.2 313.0 L125.5 315.3 L121.7 318.3 L120.9 325.1" fill="none" stroke="#000" stroke-width="0.75" stroke-linejoin="round" stroke-linecap="round"/>
<ellipse cx="158.9" cy="295.1" rx="1.5" ry="1.5" fill="#000" transform="rotate(0 158.9 295.1)"/>
<ellipse cx="167.6" cy="296.5" rx="1.3" ry="1.3" fill="#000" transform="rotate(0 167.6 296.5)"/>
<ellipse cx="171.4" cy="296.9" rx="1.1" ry="1.1" fill="#000" transform="rotate(0 171.4 296.9)"/>
<ellipse cx="167.1" cy="300.0" rx="1.1" ry="1.1" fill="#000" transform="rotate(0 167.1 300.0)"/>
<ellipse cx="173.7" cy="300.7" rx="1.3" ry="1.3" fill="#000" transform="rotate(0 173.7 300.7)"/>
<ellipse cx="176.7" cy="303.0" rx="1.5" ry="1.5" fill="#000" transform="rotate(0 176.7 303.0)"/>
<ellipse cx="166.0" cy="303.8" rx="1.0" ry="0.9" fill="#000" transform="rotate(0 166.0 303.8)"/>
<ellipse cx="182.4" cy="296.2" rx="1.3" ry="1.3" fill="#000" transform="rotate(0 182.4 296.2)"/>
<ellipse cx="158.1" cy="302.3" rx="1.1" ry="1.1" fill="#000" transform="rotate(0 158.1 302.3)"/>
<ellipse cx="147.7" cy="311.5" rx="1.3" ry="1.3" fill="#000" transform="rotate(0 147.7 311.5)"/>
<ellipse cx="185.0" cy="316.8" rx="1.0" ry="0.9" fill="#000" transform="rotate(0 185.0 316.8)"/>
<ellipse cx="171.4" cy="303.5" rx="2.6" ry="1.7" fill="#000" transform="rotate(0 171.4 303.5)"/>
<path d="M148.5 304.6 L153.8 306.9" fill="none" stroke="#000" stroke-width="1.80" stroke-linejoin="round" stroke-linecap="round"/>
<path d="M152.3 303.8 L156.9 307.6 L159.6 306.9" fill="none" stroke="#000" stroke-width="1.80" stroke-linejoin="round" stroke-linecap="round"/>
<ellipse cx="135.5" cy="321.9" rx="2.8" ry="1.8" fill="#000" transform="rotate(45 135.5 321.9)"/>
<path d="M179.8 319.9 L185.0 322.9" fill="none" stroke="#000" stroke-width="1.80" stroke-linejoin="round" stroke-linecap="round"/>
<ellipse cx="209.8" cy="247.2" rx="3.7" ry="1.8" fill="#000" transform="rotate(10 209.8 247.2)"/>
<ellipse cx="232.7" cy="257.6" rx="1.5" ry="3.3" fill="#000" transform="rotate(-15 232.7 257.6)"/>
<ellipse cx="236.7" cy="274.8" rx="2.2" ry="1.3" fill="#000" transform="rotate(15 236.7 274.8)"/>
<ellipse cx="226.3" cy="278.7" rx="3.3" ry="1.5" fill="#000" transform="rotate(5 226.3 278.7)"/>
<ellipse cx="258.7" cy="279.0" rx="1.7" ry="1.1" fill="#000" transform="rotate(30 258.7 279.0)"/>
<ellipse cx="267.1" cy="282.4" rx="2.2" ry="1.5" fill="#000" transform="rotate(25 267.1 282.4)"/>
<ellipse cx="250.7" cy="291.6" rx="2.2" ry="1.5" fill="#000" transform="rotate(30 250.7 291.6)"/>
<ellipse cx="238.5" cy="292.3" rx="2.4" ry="1.3" fill="#000" transform="rotate(10 238.5 292.3)"/>
<ellipse cx="232.1" cy="291.3" rx="1.8" ry="0.9" fill="#000" transform="rotate(0 232.1 291.3)"/>
<ellipse cx="244.9" cy="293.6" rx="2.6" ry="1.8" fill="#000" transform="rotate(30 244.9 293.6)"/>
<ellipse cx="233.2" cy="294.9" rx="2.9" ry="1.3" fill="#000" transform="rotate(0 233.2 294.9)"/>
<ellipse cx="233.9" cy="297.7" rx="2.6" ry="1.5" fill="#000" transform="rotate(0 233.9 297.7)"/>
<ellipse cx="224.0" cy="299.7" rx="2.4" ry="1.3" fill="#000" transform="rotate(0 224.0 299.7)"/>
<ellipse cx="230.9" cy="307.2" rx="3.3" ry="1.8" fill="#000" transform="rotate(-15 230.9 307.2)"/>
<ellipse cx="217.1" cy="319.4" rx="2.2" ry="1.1" fill="#000" transform="rotate(-15 217.1 319.4)"/>
<ellipse cx="223.2" cy="319.4" rx="4.6" ry="1.8" fill="#000" transform="rotate(-5 223.2 319.4)"/>
<ellipse cx="238.5" cy="320.6" rx="1.5" ry="2.2" fill="#000" transform="rotate(30 238.5 320.6)"/>
<ellipse cx="188.1" cy="322.9" rx="1.8" ry="1.5" fill="#000" transform="rotate(0 188.1 322.9)"/>
<ellipse cx="219.4" cy="281.8" rx="1.5" ry="1.5" fill="#000" transform="rotate(0 219.4 281.8)"/>
<ellipse cx="279.8" cy="281.3" rx="1.3" ry="1.3" fill="#000" transform="rotate(0 279.8 281.3)"/>
<ellipse cx="283.6" cy="273.2" rx="1.5" ry="1.5" fill="#000" transform="rotate(0 283.6 273.2)"/>
<ellipse cx="284.4" cy="297.4" rx="1.3" ry="1.3" fill="#000" transform="rotate(0 284.4 297.4)"/>
<ellipse cx="225.1" cy="294.3" rx="1.3" ry="1.3" fill="#000" transform="rotate(0 225.1 294.3)"/>
<ellipse cx="233.2" cy="306.1" rx="1.1" ry="1.1" fill="#000" transform="rotate(0 233.2 306.1)"/>
<ellipse cx="229.0" cy="310.7" rx="1.0" ry="0.9" fill="#000" transform="rotate(0 229.0 310.7)"/>
<ellipse cx="207.5" cy="311.1" rx="1.3" ry="1.3" fill="#000" transform="rotate(0 207.5 311.1)"/>
<ellipse cx="230.4" cy="314.8" rx="1.1" ry="1.1" fill="#000" transform="rotate(0 230.4 314.8)"/>
<ellipse cx="213.0" cy="318.8" rx="1.1" ry="1.1" fill="#000" transform="rotate(0 213.0 318.8)"/>
<ellipse cx="237.0" cy="317.6" rx="1.0" ry="0.9" fill="#000" transform="rotate(0 237.0 317.6)"/>
<ellipse cx="241.3" cy="318.0" rx="1.1" ry="1.1" fill="#000" transform="rotate(0 241.3 318.0)"/>
<ellipse cx="234.7" cy="322.9" rx="1.0" ry="0.9" fill="#000" transform="rotate(0 234.7 322.9)"/>
<ellipse cx="194.9" cy="323.2" rx="1.0" ry="0.9" fill="#000" transform="rotate(0 194.9 323.2)"/>
<ellipse cx="207.9" cy="323.4" rx="1.3" ry="1.3" fill="#000" transform="rotate(0 207.9 323.4)"/>
<ellipse cx="217.9" cy="323.2" rx="1.0" ry="0.9" fill="#000" transform="rotate(0 217.9 323.2)"/>
<ellipse cx="250.4" cy="235.5" rx="1.0" ry="0.9" fill="#000" transform="rotate(0 250.4 235.5)"/>
<path d="M271.4 235.0 L273.7 238.8 L276.7 241.4 L285.0 241.4" fill="none" stroke="#000" stroke-width="0.75" stroke-linejoin="round" stroke-linecap="round"/>
<path d="M285.0 241.4 L294.2 242.3 L303.3 241.9 L311.0 242.6 L317.1 245.7 L324.8 247.5 L332.4 248.0 L334.7 249.5 L338.5 248.8 L346.2 246.0 L353.8 243.9 L361.5 243.4 L369.1 242.6 L375.2 241.1 L379.8 238.1 L385.0 235.8" fill="none" stroke="#000" stroke-width="0.75" stroke-linejoin="round" stroke-linecap="round"/>
<path d="M298.8 282.4 L301.1 280.6 L304.9 281.6 L307.6 284.2 L306.4 285.8 L302.6 285.5 L299.5 284.2 L298.8 282.4" fill="none" stroke="#000" stroke-width="1.80" stroke-linejoin="round" stroke-linecap="round"/>
<ellipse cx="291.1" cy="294.3" rx="2.2" ry="1.5" fill="#000" transform="rotate(20 291.1 294.3)"/>
<ellipse cx="285.8" cy="296.9" rx="1.5" ry="1.5" fill="#000" transform="rotate(0 285.8 296.9)"/>
<ellipse cx="285.5" cy="273.2" rx="1.1" ry="1.1" fill="#000" transform="rotate(0 285.5 273.2)"/>
<path d="M385.0 224.5 L391.1 226.3 L397.2 227.2 L403.3 225.2 L407.9 222.9 L415.6 220.6 L420.2 217.6 L426.3 214.5 L433.9 213.5 L440.0 214.1 L442.3 212.2 L440.8 209.2 L437.0 206.9 L430.9 205.4 L423.2 206.1 L415.6 206.1 L411.8 203.8 L413.3 200.0" fill="none" stroke="#000" stroke-width="0.75" stroke-linejoin="round" stroke-linecap="round"/>
<path d="M385.0 232.9 L386.5 234.4" fill="none" stroke="#000" stroke-width="0.75" stroke-linejoin="round" stroke-linecap="round"/>
<ellipse cx="426.6" cy="205.8" rx="1.7" ry="1.7" fill="#000" transform="rotate(0 426.6 205.8)"/>
<ellipse cx="423.2" cy="200.5" rx="1.1" ry="1.1" fill="#000" transform="rotate(0 423.2 200.5)"/>
<ellipse cx="425.2" cy="222.2" rx="1.5" ry="1.5" fill="#000" transform="rotate(0 425.2 222.2)"/>
<ellipse cx="419.1" cy="237.6" rx="1.5" ry="1.5" fill="#000" transform="rotate(0 419.1 237.6)"/>
<ellipse cx="473.4" cy="223.7" rx="1.5" ry="1.5" fill="#000" transform="rotate(0 473.4 223.7)"/>
<ellipse cx="477.8" cy="238.2" rx="1.5" ry="1.5" fill="#000" transform="rotate(0 477.8 238.2)"/>
<ellipse cx="395.4" cy="254.7" rx="1.1" ry="1.1" fill="#000" transform="rotate(0 395.4 254.7)"/>
<ellipse cx="391.1" cy="257.3" rx="1.1" ry="1.1" fill="#000" transform="rotate(0 391.1 257.3)"/>
<ellipse cx="421.4" cy="257.6" rx="1.3" ry="1.3" fill="#000" transform="rotate(0 421.4 257.6)"/>
<ellipse cx="416.3" cy="288.7" rx="1.1" ry="1.1" fill="#000" transform="rotate(0 416.3 288.7)"/>
<path d="M461.5 279.5 L456.9 278.7 L452.3 277.2 L446.2 278.7 L440.0 280.3 L437.0 278.7 L435.5 274.9 L430.9 273.4 L427.0 271.9 L426.3 268.8 L428.6 267.3 L433.9 267.0 L438.5 264.2 L441.6 261.2 L446.2 258.9 L450.0 255.8 L453.8 254.7 L458.1 255.4 L459.2 257.8 L456.9 260.4 L454.6 263.5 L452.3 266.5 L451.5 269.6 L453.8 268.8 L456.9 265.7 L461.5 264.2 L467.6 262.7 L475.2 261.2 L479.8 258.1 L485.0 256.3" fill="none" stroke="#000" stroke-width="1.80" stroke-linejoin="round" stroke-linecap="round"/>
<path d="M475.2 261.2 L481.3 264.2 L482.1 268.0 L479.8 270.3 L477.5 274.2 L479.8 276.5 L485.0 275.7" fill="none" stroke="#000" stroke-width="1.80" stroke-linejoin="round" stroke-linecap="round"/>
<path d="M462.4 280.3 L458.7 282.8 L453.8 283.4 L450.2 285.2 L446.5 287.7 L442.8 290.7 L439.1 294.4 L438.5 297.5 L442.2 299.9 L445.9 302.4 L447.1 306.0 L448.9 310.9 L451.4 314.6 L455.0 318.3 L456.3 321.3 L455.0 323.2 L451.4 319.5 L446.5 317.7 L440.4 317.0 L435.5 316.4 L431.8 319.5 L426.9 323.2 L422.0 326.8 L415.9 330.5 L409.8 332.9" fill="none" stroke="#000" stroke-width="1.80" stroke-linejoin="round" stroke-linecap="round"/>
<path d="M426.3 269.3 L426.9 272.4 L431.8 273.6 L435.5 274.8 L436.7 279.1 L440.4 281.0 L445.3 278.5 L450.2 277.3 L455.0 278.5 L459.9 279.7 L462.4 280.3" fill="none" stroke="#000" stroke-width="1.80" stroke-linejoin="round" stroke-linecap="round"/>
<ellipse cx="416.1" cy="289.5" rx="1.3" ry="1.3" fill="#000" transform="rotate(0 416.1 289.5)"/>
<ellipse cx="423.2" cy="299.1" rx="1.5" ry="1.5" fill="#000" transform="rotate(0 423.2 299.1)"/>
<ellipse cx="430.0" cy="303.0" rx="1.0" ry="0.9" fill="#000" transform="rotate(0 430.0 303.0)"/>
<ellipse cx="422.6" cy="325.6" rx="1.0" ry="1.0" fill="#000" transform="rotate(0 422.6 325.6)"/>
<ellipse cx="421.0" cy="315.2" rx="1.3" ry="1.9" fill="#000" transform="rotate(0 421.0 315.2)"/>
<ellipse cx="430.8" cy="309.1" rx="4.4" ry="2.5" fill="#000" transform="rotate(-20 430.8 309.1)"/>
<ellipse cx="436.9" cy="310.9" rx="2.3" ry="3.2" fill="#000" transform="rotate(-20 436.9 310.9)"/>
<ellipse cx="425.1" cy="320.7" rx="2.9" ry="1.0" fill="#000" transform="rotate(0 425.1 320.7)"/>
<ellipse cx="440.4" cy="320.5" rx="2.2" ry="0.9" fill="#000" transform="rotate(0 440.4 320.5)"/>
<ellipse cx="447.7" cy="320.7" rx="2.2" ry="1.0" fill="#000" transform="rotate(0 447.7 320.7)"/>
<ellipse cx="435.5" cy="321.9" rx="1.0" ry="1.8" fill="#000" transform="rotate(0 435.5 321.9)"/>
<path d="M442.6 323.2 L443.8 321.3 L446.2 321.7 L446.7 323.8 L445.0 325.4 L443.1 324.6 L442.6 323.2" fill="none" stroke="#000" stroke-width="1.80" stroke-linejoin="round" stroke-linecap="round"/>
<path d="M444.0 329.9 L451.4 328.7" fill="none" stroke="#000" stroke-width="1.80" stroke-linejoin="round" stroke-linecap="round"/>
<path d="M453.8 329.9 L459.9 332.3" fill="none" stroke="#000" stroke-width="1.80" stroke-linejoin="round" stroke-linecap="round"/>
<path d="M551.2 235.0 L545.6 238.2 L539.3 241.4 L534.5 241.7 L530.5 239.0 L526.5 238.2 L522.5 241.4 L516.9 245.4 L512.9 249.4 L511.3 254.9 L505.7 258.9 L500.2 261.3 L496.2 264.5 L497.8 267.7 L501.8 270.9 L504.9 275.7 L508.9 281.3 L510.2 287.7 L509.7 293.2 L505.7 296.4 L500.2 297.2 L494.6 298.8 L489.8 300.4 L486.6 300.4 L488.2 295.6 L490.6 290.8 L489.0 286.1 L487.4 282.9 L491.4 281.3 L491.4 277.3 L487.4 276.2 L485.0 276.2" fill="none" stroke="#000" stroke-width="1.80" stroke-linejoin="round" stroke-linecap="round"/>
<path d="M493.0 249.0 L500.2 251.0 L502.6 246.2 L508.9 243.8 L512.9 239.8 L518.5 241.4 L522.5 241.4" fill="none" stroke="#000" stroke-width="0.75" stroke-linejoin="round" stroke-linecap="round"/>
<path d="M523.3 235.0 L522.5 238.2 L522.5 241.4" fill="none" stroke="#000" stroke-width="0.75" stroke-linejoin="round" stroke-linecap="round"/>
<path d="M491.4 273.3 L501.8 272.5" fill="none" stroke="#000" stroke-width="0.75" stroke-linejoin="round" stroke-linecap="round"/>
<path d="M486.9 307.9 L489.8 306.5 L492.7 307.6 L490.1 309.4 L486.9 307.9" fill="none" stroke="#000" stroke-width="1.20" stroke-linejoin="round" stroke-linecap="round"/>
<ellipse cx="508.9" cy="300.7" rx="1.1" ry="2.7" fill="#000" transform="rotate(15 508.9 300.7)"/>
<path d="M504.1 314.0 L508.1 310.0" fill="none" stroke="#000" stroke-width="1.80" stroke-linejoin="round" stroke-linecap="round"/>
<path d="M584.7 265.3 L582.3 270.1 L578.3 274.9 L572.8 278.9 L566.4 280.5 L561.6 282.9 L559.2 286.9 L556.0 290.8 L548.8 291.6 L540.8 292.4 L534.5 293.2 L529.7 296.4 L523.3 300.4 L519.3 302.8 L513.7 305.2 L510.5 307.6" fill="none" stroke="#000" stroke-width="1.80" stroke-linejoin="round" stroke-linecap="round"/>
<ellipse cx="563.5" cy="281.3" rx="2.7" ry="1.9" fill="#000" transform="rotate(-30 563.5 281.3)"/>
<ellipse cx="573.2" cy="274.4" rx="1.3" ry="2.7" fill="#000" transform="rotate(30 573.2 274.4)"/>
<ellipse cx="537.3" cy="287.3" rx="1.5" ry="1.5" fill="#000" transform="rotate(0 537.3 287.3)"/>
<ellipse cx="556.8" cy="294.8" rx="1.5" ry="1.5" fill="#000" transform="rotate(0 556.8 294.8)"/>
<path d="M584.7 292.4 L580.7 294.8 L576.0 297.2 L571.2 298.0 L566.4 297.2 L562.4 296.4 L560.0 299.6 L555.2 298.0 L553.6 302.0 L556.0 305.2 L552.0 306.0 L548.8 302.8 L548.0 298.8 L540.8 298.8 L534.5 300.4 L529.7 301.2 L523.3 302.8" fill="none" stroke="#000" stroke-width="1.80" stroke-linejoin="round" stroke-linecap="round"/>
<path d="M530.5 305.2 L536.1 302.8 L543.2 302.0 L547.2 301.2 L544.8 305.2 L540.1 308.4 L536.1 306.8 L532.1 310.0 L530.5 305.2" fill="none" stroke="#000" stroke-width="1.80" stroke-linejoin="round" stroke-linecap="round"/>
<path d="M510.5 307.6 L512.9 305.2 L519.3 304.4 L525.7 306.0 L527.3 310.8 L524.9 316.4 L522.5 321.2 L519.3 324.4 L515.3 322.0 L517.7 316.4 L513.7 314.8 L511.3 310.0 L510.5 307.6" fill="none" stroke="#000" stroke-width="1.80" stroke-linejoin="round" stroke-linecap="round"/>
<ellipse cx="515.6" cy="312.4" rx="2.3" ry="3.4" fill="#000" transform="rotate(-20 515.6 312.4)"/>
<path d="M582.3 244.6 L584.7 247.0" fill="none" stroke="#000" stroke-width="1.80" stroke-linejoin="round" stroke-linecap="round"/>
<path d="M583.1 258.9 L584.7 261.3" fill="none" stroke="#000" stroke-width="1.80" stroke-linejoin="round" stroke-linecap="round"/>
<ellipse cx="581.5" cy="246.2" rx="1.1" ry="1.1" fill="#000" transform="rotate(0 581.5 246.2)"/>
<ellipse cx="583.6" cy="294.8" rx="1.9" ry="2.7" fill="#000" transform="rotate(0 583.6 294.8)"/>
<ellipse cx="519.0" cy="322.4" rx="3.4" ry="2.2" fill="#000" transform="rotate(-30 519.0 322.4)"/>
<path d="M517.2 329.6 L521.7 327.1" fill="none" stroke="#000" stroke-width="1.80" stroke-linejoin="round" stroke-linecap="round"/>
<path d="M506.4 347.5 L511.9 343.0" fill="none" stroke="#000" stroke-width="1.80" stroke-linejoin="round" stroke-linecap="round"/>
<path d="M497.6 359.8 L501.7 354.7" fill="none" stroke="#000" stroke-width="1.80" stroke-linejoin="round" stroke-linecap="round"/>
<path d="M121.5 324.2 L117.7 328.0 L113.9 332.6 L109.3 337.9 L104.8 341.7 L99.4 345.5 L93.4 348.5 L89.6 346.2" fill="none" stroke="#000" stroke-width="0.75" stroke-linejoin="round" stroke-linecap="round"/>
<path d="M156.4 324.2 L162.5 327.2 L167.8 330.3 L173.1 328.0 L179.2 330.3 L185.0 333.3" fill="none" stroke="#000" stroke-width="0.75" stroke-linejoin="round" stroke-linecap="round"/>
<path d="M167.8 330.3 L164.0 334.1 L161.0 338.6 L164.0 341.7 L170.1 344.0 L176.2 347.0 L182.3 350.0 L185.0 350.8" fill="none" stroke="#000" stroke-width="0.75" stroke-linejoin="round" stroke-linecap="round"/>
<path d="M100.2 290.0 L99.4 295.3 L95.6 299.1 L96.4 302.9 L91.8 304.4 L89.6 303.7" fill="none" stroke="#000" stroke-width="0.75" stroke-linejoin="round" stroke-linecap="round"/>
<path d="M89.6 308.2 L91.1 306.7" fill="none" stroke="#000" stroke-width="0.75" stroke-linejoin="round" stroke-linecap="round"/>
<path d="M89.6 356.9 L90.3 361.4 L89.6 365.1" fill="none" stroke="#000" stroke-width="0.75" stroke-linejoin="round" stroke-linecap="round"/>
<ellipse cx="135.6" cy="321.9" rx="2.9" ry="1.8" fill="#000" transform="rotate(40 135.6 321.9)"/>
<ellipse cx="169.0" cy="326.9" rx="2.7" ry="1.5" fill="#000" transform="rotate(10 169.0 326.9)"/>
<path d="M89.6 395.7 L94.1 398.0 L98.7 396.5 L103.2 393.4 L105.5 389.6 L107.0 387.4 L107.8 391.9 L108.6 399.5 L110.1 408.6 L111.6 417.8 L113.1 426.9 L115.4 434.5 L117.7 438.3" fill="none" stroke="#000" stroke-width="1.80" stroke-linejoin="round" stroke-linecap="round"/>
<ellipse cx="107.0" cy="388.1" rx="2.2" ry="1.6" fill="#000" transform="rotate(0 107.0 388.1)"/>
<path d="M160.2 438.3 L162.5 432.9 L167.1 430.7 L168.6 426.9 L173.1 427.6 L176.9 424.6 L180.0 420.8 L185.0 417.0" fill="none" stroke="#000" stroke-width="1.80" stroke-linejoin="round" stroke-linecap="round"/>
<ellipse cx="168.3" cy="426.6" rx="1.3" ry="1.3" fill="#000" transform="rotate(0 168.3 426.6)"/>
<path d="M129.8 437.2 L134.4 435.2" fill="none" stroke="#000" stroke-width="1.80" stroke-linejoin="round" stroke-linecap="round"/>
<path d="M89.6 362.3 L94.1 364.6 L96.4 369.1 L94.1 372.9 L89.6 372.2" fill="none" stroke="#000" stroke-width="0.75" stroke-linejoin="round" stroke-linecap="round"/>
<ellipse cx="91.1" cy="383.1" rx="1.5" ry="1.5" fill="#000" transform="rotate(0 91.1 383.1)"/>
<ellipse cx="128.6" cy="370.6" rx="1.8" ry="1.5" fill="#000" transform="rotate(-40 128.6 370.6)"/>
<ellipse cx="179.2" cy="374.0" rx="2.6" ry="1.6" fill="#000" transform="rotate(-20 179.2 374.0)"/>
<ellipse cx="183.8" cy="390.9" rx="1.0" ry="0.9" fill="#000" transform="rotate(0 183.8 390.9)"/>
<path d="M185.0 337.4 L189.6 338.6 L195.6 342.4 L201.7 345.5 L207.8 347.0 L215.4 347.4 L221.5 345.9 L223.0 349.3 L224.5 347.8 L229.1 344.0 L235.2 343.2 L239.7 345.5 L245.0 347.8 L250.3 344.0 L256.4 340.2 L262.5 337.1 L268.6 337.1 L273.9 335.6 L276.2 338.6 L278.5 342.4 L282.3 343.2 L285.0 341.7" fill="none" stroke="#000" stroke-width="0.75" stroke-linejoin="round" stroke-linecap="round"/>
<path d="M185.0 350.0 L189.6 349.3 L195.6 352.3 L201.7 355.3 L209.3 356.9 L216.9 356.9 L216.2 350.8 L217.7 347.4" fill="none" stroke="#000" stroke-width="0.75" stroke-linejoin="round" stroke-linecap="round"/>
<path d="M223.0 349.3 L222.2 352.3 L226.0 354.6 L233.6 355.3 L241.2 354.6 L245.8 352.3 L245.0 347.8" fill="none" stroke="#000" stroke-width="0.75" stroke-linejoin="round" stroke-linecap="round"/>
<path d="M276.2 338.6 L276.2 343.2" fill="none" stroke="#000" stroke-width="1.80" stroke-linejoin="round" stroke-linecap="round"/>
<path d="M280.0 347.8 L280.7 352.3" fill="none" stroke="#000" stroke-width="1.80" stroke-linejoin="round" stroke-linecap="round"/>
<path d="M282.3 343.2 L280.0 347.8" fill="none" stroke="#000" stroke-width="0.75" stroke-linejoin="round" stroke-linecap="round"/>
<path d="M228.3 365.1 L229.1 360.7 L233.6 359.1 L236.7 359.9" fill="none" stroke="#000" stroke-width="1.80" stroke-linejoin="round" stroke-linecap="round"/>
<ellipse cx="235.5" cy="339.1" rx="4.0" ry="1.8" fill="#000" transform="rotate(-10 235.5 339.1)"/>
<ellipse cx="233.3" cy="342.4" rx="1.1" ry="1.1" fill="#000" transform="rotate(0 233.3 342.4)"/>
<ellipse cx="228.3" cy="325.3" rx="1.1" ry="1.1" fill="#000" transform="rotate(0 228.3 325.3)"/>
<ellipse cx="204.8" cy="327.2" rx="1.6" ry="1.6" fill="#000" transform="rotate(0 204.8 327.2)"/>
<ellipse cx="193.4" cy="330.3" rx="1.3" ry="1.3" fill="#000" transform="rotate(0 193.4 330.3)"/>
<ellipse cx="200.2" cy="333.0" rx="1.1" ry="1.1" fill="#000" transform="rotate(0 200.2 333.0)"/>
<ellipse cx="199.1" cy="339.8" rx="1.5" ry="1.5" fill="#000" transform="rotate(0 199.1 339.8)"/>
<ellipse cx="204.8" cy="330.3" rx="1.0" ry="0.9" fill="#000" transform="rotate(0 204.8 330.3)"/>
<ellipse cx="235.2" cy="326.5" rx="4.0" ry="2.0" fill="#000" transform="rotate(-10 235.2 326.5)"/>
<ellipse cx="199.4" cy="325.7" rx="3.3" ry="1.6" fill="#000" transform="rotate(10 199.4 325.7)"/>
<path d="M185.0 417.3 L189.6 412.7 L194.2 408.1 L200.3 404.3 L206.4 400.5 L208.7 395.1 L211.8 391.3 L217.1 388.2 L221.7 389.0 L226.3 387.5 L230.9 386.7 L235.5 384.4 L240.0 383.6 L242.3 385.9 L243.9 390.5 L246.2 395.1 L250.7 398.9 L254.6 402.8 L256.9 407.3 L259.9 411.2 L261.5 417.3 L261.1 424.9 L260.7 430.3 L264.5 431.8 L268.3 431.8 L272.9 428.0 L276.7 424.9 L280.6 421.9 L282.9 426.5 L285.0 432.6" fill="none" stroke="#000" stroke-width="1.80" stroke-linejoin="round" stroke-linecap="round"/>
<path d="M217.9 387.5 L223.2 390.1 L229.3 388.2 L235.5 385.9 L239.3 384.9" fill="none" stroke="#000" stroke-width="1.80" stroke-linejoin="round" stroke-linecap="round"/>
<path d="M236.2 359.2 L230.9 359.5 L228.6 363.8 L228.6 369.9 L229.3 374.5" fill="none" stroke="#000" stroke-width="1.80" stroke-linejoin="round" stroke-linecap="round"/>
<path d="M216.3 368.3 L219.4 372.2 L224.0 374.5" fill="none" stroke="#000" stroke-width="1.80" stroke-linejoin="round" stroke-linecap="round"/>
<path d="M217.9 363.8 L220.9 366.8 L222.5 372.9 L220.9 378.3 L223.2 382.9 L222.5 386.7" fill="none" stroke="#000" stroke-width="0.75" stroke-linejoin="round" stroke-linecap="round"/>
<path d="M217.9 363.8 L223.2 365.3 L230.9 366.1 L238.5 365.3 L246.2 366.5 L248.5 369.1 L243.9 371.4 L241.6 374.5 L240.0 378.3 L242.3 381.3 L243.9 377.5 L246.9 378.3 L247.7 382.9 L246.2 385.9" fill="none" stroke="#000" stroke-width="0.75" stroke-linejoin="round" stroke-linecap="round"/>
<path d="M285.0 351.5 L276.7 350.0" fill="none" stroke="#000" stroke-width="0.75" stroke-linejoin="round" stroke-linecap="round"/>
<path d="M267.6 357.6 L265.3 363.8 L261.5 369.9 L256.9 374.5 L254.6 380.6 L253.0 386.7 L250.7 389.0 L249.2 393.6" fill="none" stroke="#000" stroke-width="0.75" stroke-linejoin="round" stroke-linecap="round"/>
<path d="M217.1 350.0 L217.9 356.1 L217.9 363.8" fill="none" stroke="#000" stroke-width="0.75" stroke-linejoin="round" stroke-linecap="round"/>
<path d="M222.5 350.0 L224.8 353.1 L233.9 354.6 L243.9 353.8 L244.6 350.0" fill="none" stroke="#000" stroke-width="0.75" stroke-linejoin="round" stroke-linecap="round"/>
<ellipse cx="206.7" cy="377.1" rx="2.6" ry="1.3" fill="#000" transform="rotate(0 206.7 377.1)"/>
<ellipse cx="186.8" cy="391.0" rx="2.6" ry="1.7" fill="#000" transform="rotate(0 186.8 391.0)"/>
<ellipse cx="275.7" cy="366.1" rx="1.3" ry="1.3" fill="#000" transform="rotate(0 275.7 366.1)"/>
<ellipse cx="246.9" cy="382.9" rx="2.0" ry="2.9" fill="#000" transform="rotate(0 246.9 382.9)"/>
<ellipse cx="285.0" cy="369.9" rx="1.1" ry="1.1" fill="#000" transform="rotate(0 285.0 369.9)"/>
<ellipse cx="285.0" cy="412.7" rx="1.5" ry="1.5" fill="#000" transform="rotate(0 285.0 412.7)"/>
<path d="M255.3 406.6 L257.6 410.4" fill="none" stroke="#000" stroke-width="1.80" stroke-linejoin="round" stroke-linecap="round"/>
<path d="M252.3 400.5 L254.6 403.5" fill="none" stroke="#000" stroke-width="1.80" stroke-linejoin="round" stroke-linecap="round"/>
<path d="M292.6 350.0 L291.9 359.2 L288.1 363.8 L285.0 366.8" fill="none" stroke="#000" stroke-width="0.75" stroke-linejoin="round" stroke-linecap="round"/>
<path d="M285.0 372.9 L291.1 375.2 L294.2 380.6 L297.2 386.7 L303.3 391.3 L306.4 392.8" fill="none" stroke="#000" stroke-width="0.75" stroke-linejoin="round" stroke-linecap="round"/>
<path d="M306.4 392.8 L302.6 398.9 L298.8 402.0 L292.6 404.3 L288.1 406.6 L285.0 408.1" fill="none" stroke="#000" stroke-width="0.75" stroke-linejoin="round" stroke-linecap="round"/>
<path d="M285.0 411.2 L288.1 417.3 L291.9 423.4 L291.1 429.5 L288.1 435.6 L287.3 438.7" fill="none" stroke="#000" stroke-width="0.75" stroke-linejoin="round" stroke-linecap="round"/>
<path d="M306.4 392.8 L310.2 390.5 L313.3 385.9 L317.9 386.7 L321.7 384.4 L326.3 383.6 L329.3 384.4 L333.9 381.3 L339.3 379.1 L343.9 381.3 L349.2 382.9 L350.7 387.5 L355.3 389.8 L359.9 391.3" fill="none" stroke="#000" stroke-width="0.75" stroke-linejoin="round" stroke-linecap="round"/>
<path d="M313.3 385.9 L315.6 390.5 L320.2 392.8 L324.8 395.9 L330.9 396.6 L335.5 399.7 L334.7 403.5 L329.3 406.6 L330.9 408.9 L337.0 411.2 L341.6 415.7 L346.2 421.9 L350.7 428.0 L355.3 432.6 L358.4 437.9" fill="none" stroke="#000" stroke-width="0.75" stroke-linejoin="round" stroke-linecap="round"/>
<path d="M306.4 392.8 L304.9 398.9 L307.9 403.5 L311.0 409.6 L309.5 415.7 L308.7 420.3 L312.5 418.0 L317.1 416.5 L321.7 417.3 L326.3 414.2" fill="none" stroke="#000" stroke-width="0.75" stroke-linejoin="round" stroke-linecap="round"/>
<path d="M326.3 414.2 L330.9 415.7 L334.7 421.9 L336.2 428.0 L340.0 434.1 L342.3 438.7" fill="none" stroke="#000" stroke-width="1.80" stroke-linejoin="round" stroke-linecap="round"/>
<path d="M359.9 391.3 L353.8 394.3 L349.2 397.4 L346.2 400.5 L343.1 403.5 L342.3 408.9 L343.9 414.2 L347.7 418.8 L352.3 424.9 L358.4 431.0 L364.5 438.7" fill="none" stroke="#000" stroke-width="1.80" stroke-linejoin="round" stroke-linecap="round"/>
<path d="M340.0 394.3 L343.9 396.6 L345.4 400.5" fill="none" stroke="#000" stroke-width="1.80" stroke-linejoin="round" stroke-linecap="round"/>
<path d="M359.9 391.3 L364.5 389.8 L368.3 391.3 L372.2 393.6 L372.9 397.4 L375.2 398.9 L376.7 395.1 L375.2 390.5 L379.8 391.3 L385.0 390.1" fill="none" stroke="#000" stroke-width="1.80" stroke-linejoin="round" stroke-linecap="round"/>
<path d="M372.9 378.3 L379.8 377.5 L385.0 379.8" fill="none" stroke="#000" stroke-width="1.80" stroke-linejoin="round" stroke-linecap="round"/>
<path d="M363.7 408.1 L366.8 404.3 L372.2 402.8 L378.3 403.5 L379.0 406.6 L376.7 410.4 L372.2 413.5 L366.8 414.2 L363.7 411.2 L363.7 408.1" fill="none" stroke="#000" stroke-width="1.80" stroke-linejoin="round" stroke-linecap="round"/>
<ellipse cx="303.0" cy="361.5" rx="1.3" ry="2.4" fill="#000" transform="rotate(0 303.0 361.5)"/>
<ellipse cx="320.9" cy="369.1" rx="1.8" ry="3.7" fill="#000" transform="rotate(-20 320.9 369.1)"/>
<ellipse cx="319.4" cy="425.7" rx="1.7" ry="1.7" fill="#000" transform="rotate(0 319.4 425.7)"/>
<ellipse cx="374.4" cy="390.1" rx="1.1" ry="1.1" fill="#000" transform="rotate(0 374.4 390.1)"/>
<path d="M449.2 350.0 L446.2 353.1 L442.3 355.4 L441.6 360.7 L442.3 364.5 L437.0 366.8 L430.9 369.9 L427.0 372.9 L421.7 376.8 L417.1 379.8 L416.3 382.9 L411.8 382.9 L406.4 384.4 L401.8 386.7 L398.8 385.9 L396.5 381.3 L395.7 385.2 L393.4 387.5 L392.6 381.3 L385.0 380.6" fill="none" stroke="#000" stroke-width="1.80" stroke-linejoin="round" stroke-linecap="round"/>
<path d="M393.4 387.5 L388.1 389.8 L385.0 391.0" fill="none" stroke="#000" stroke-width="1.80" stroke-linejoin="round" stroke-linecap="round"/>
<ellipse cx="404.4" cy="375.2" rx="1.7" ry="1.7" fill="#000" transform="rotate(0 404.4 375.2)"/>
<ellipse cx="440.8" cy="356.1" rx="1.7" ry="1.7" fill="#000" transform="rotate(0 440.8 356.1)"/>
<ellipse cx="430.1" cy="370.2" rx="1.5" ry="1.5" fill="#000" transform="rotate(0 430.1 370.2)"/>
<ellipse cx="422.5" cy="377.5" rx="1.5" ry="1.5" fill="#000" transform="rotate(0 422.5 377.5)"/>
<path d="M443.9 378.3 L446.2 372.9 L450.0 366.8 L454.6 365.3 L456.9 367.6 L456.1 372.9 L453.8 379.1 L450.7 384.4 L448.9 389.0 L446.9 385.9 L444.6 382.9 L443.9 378.3" fill="none" stroke="#000" stroke-width="1.80" stroke-linejoin="round" stroke-linecap="round"/>
<path d="M443.1 438.7 L441.6 429.5 L443.9 430.3 L446.2 423.4 L446.9 415.7 L450.0 412.7 L455.3 413.5 L459.9 414.2 L459.2 418.8 L460.7 423.4 L459.2 428.0 L455.3 432.6 L453.0 438.7" fill="none" stroke="#000" stroke-width="1.80" stroke-linejoin="round" stroke-linecap="round"/>
<path d="M456.1 438.4 L457.6 437.2" fill="none" stroke="#000" stroke-width="1.80" stroke-linejoin="round" stroke-linecap="round"/>
<ellipse cx="453.5" cy="407.6" rx="1.1" ry="1.1" fill="#000" transform="rotate(0 453.5 407.6)"/>
<ellipse cx="456.6" cy="410.7" rx="1.3" ry="1.3" fill="#000" transform="rotate(0 456.6 410.7)"/>
<path d="M469.1 372.6 L473.7 370.6" fill="none" stroke="#000" stroke-width="1.80" stroke-linejoin="round" stroke-linecap="round"/>
<ellipse cx="481.0" cy="368.8" rx="1.3" ry="1.3" fill="#000" transform="rotate(0 481.0 368.8)"/>
<path d="M455.7 318.7 L456.3 322.3 L453.8 326.0 L448.9 327.8 L445.3 330.3 L450.2 329.7 L455.0 330.3 L458.7 331.5 L457.5 335.2 L455.7 339.5 L453.8 343.1 L450.2 345.6 L448.3 349.3 L445.3 352.9 L441.0 355.4 L440.4 359.0 L441.6 362.1 L437.9 365.2 L434.9 367.6 L430.6 370.7 L426.3 374.9 L421.4 378.0 L417.1 381.1 L412.2 382.9 L406.1 384.7 L400.0 385.9" fill="none" stroke="#000" stroke-width="1.80" stroke-linejoin="round" stroke-linecap="round"/>
<path d="M433.0 318.7 L429.4 322.3 L424.5 326.0 L420.8 329.1 L417.1 331.5 L413.5 333.3 L410.4 330.9 L406.7 327.8 L404.3 326.0 L400.0 332.1" fill="none" stroke="#000" stroke-width="1.80" stroke-linejoin="round" stroke-linecap="round"/>
<ellipse cx="417.1" cy="338.9" rx="2.1" ry="4.7" fill="#000" transform="rotate(10 417.1 338.9)"/>
<polygon points="401.8,329.7 404.3,325.4 407.3,328.5 404.9,330.3" fill="#000"/>
<ellipse cx="435.5" cy="334.6" rx="2.6" ry="1.6" fill="#000" transform="rotate(-10 435.5 334.6)"/>
<ellipse cx="404.5" cy="375.2" rx="1.6" ry="1.6" fill="#000" transform="rotate(0 404.5 375.2)"/>
<ellipse cx="441.0" cy="356.0" rx="1.8" ry="1.8" fill="#000" transform="rotate(0 441.0 356.0)"/>
<ellipse cx="455.7" cy="337.0" rx="1.5" ry="1.5" fill="#000" transform="rotate(0 455.7 337.0)"/>
<ellipse cx="429.4" cy="371.3" rx="1.5" ry="1.5" fill="#000" transform="rotate(0 429.4 371.3)"/>
<ellipse cx="439.1" cy="363.9" rx="1.8" ry="1.8" fill="#000" transform="rotate(0 439.1 363.9)"/>
<ellipse cx="415.9" cy="336.4" rx="1.5" ry="1.5" fill="#000" transform="rotate(0 415.9 336.4)"/>
<path d="M469.1 372.5 L474.0 371.0" fill="none" stroke="#000" stroke-width="1.80" stroke-linejoin="round" stroke-linecap="round"/>
<path d="M403.7 326.0 L401.6 329.4 L400.9 332.8 L396.9 332.8 L393.5 336.2 L389.4 338.2 L386.7 339.6" fill="none" stroke="#000" stroke-width="1.80" stroke-linejoin="round" stroke-linecap="round"/>
<ellipse cx="390.3" cy="338.5" rx="3.3" ry="2.0" fill="#000" transform="rotate(-25 390.3 338.5)"/>
<ellipse cx="395.5" cy="333.2" rx="1.1" ry="1.1" fill="#000" transform="rotate(0 395.5 333.2)"/>
<ellipse cx="404.3" cy="326.9" rx="2.0" ry="1.6" fill="#000" transform="rotate(0 404.3 326.9)"/>
<ellipse cx="415.9" cy="342.3" rx="1.5" ry="1.0" fill="#000" transform="rotate(0 415.9 342.3)"/>
<ellipse cx="421.3" cy="315.1" rx="1.0" ry="1.6" fill="#000" transform="rotate(0 421.3 315.1)"/>
<ellipse cx="423.3" cy="299.2" rx="1.6" ry="1.6" fill="#000" transform="rotate(0 423.3 299.2)"/>
<ellipse cx="428.8" cy="310.4" rx="1.6" ry="1.0" fill="#000" transform="rotate(0 428.8 310.4)"/>
<ellipse cx="426.1" cy="320.6" rx="2.0" ry="0.9" fill="#000" transform="rotate(0 426.1 320.6)"/>
<ellipse cx="416.6" cy="290.3" rx="1.0" ry="0.9" fill="#000" transform="rotate(0 416.6 290.3)"/>
<ellipse cx="353.4" cy="331.8" rx="1.5" ry="0.9" fill="#000" transform="rotate(0 353.4 331.8)"/>
    </g>
    <rect x="89.5" y="155.5" width="496" height="282.6" fill="none" stroke="#000" stroke-width="1.2"/>
    <!-- colorbar -->
    <g shape-rendering="crispEdges">
      <rect x="89" y="467" width="71" height="14" fill="#5b39fd"/>
      <rect x="160" y="467" width="71" height="14" fill="#129ff1"/>
      <rect x="231" y="467" width="71" height="14" fill="#37e6d8"/>
      <rect x="302" y="467" width="71" height="14" fill="#80ffb4"/>
      <rect x="373" y="467" width="71" height="14" fill="#c8e688"/>
      <rect x="444" y="467" width="71" height="14" fill="#ff9f54"/>
      <rect x="515" y="467" width="71" height="14" fill="#ff391d"/>
    </g>
    <rect x="89.5" y="467.5" width="496" height="14" fill="none" stroke="#000" stroke-width="1"/>
    <g stroke="#000" stroke-width="1" shape-rendering="crispEdges">
      <line x1="89.5" y1="481" x2="89.5" y2="486"/><line x1="160.5" y1="481" x2="160.5" y2="486"/><line x1="231.5" y1="481" x2="231.5" y2="486"/><line x1="302.5" y1="481" x2="302.5" y2="486"/><line x1="373.5" y1="481" x2="373.5" y2="486"/><line x1="444.5" y1="481" x2="444.5" y2="486"/><line x1="515.5" y1="481" x2="515.5" y2="486"/><line x1="585.5" y1="481" x2="585.5" y2="486"/>
    </g>
    <g class="cbl">
      <text x="88.5" y="507">0</text><text x="159.5" y="507">6</text><text x="230.5" y="507">12</text><text x="301.5" y="507">18</text><text x="372.5" y="507">24</text><text x="443.5" y="507">30</text><text x="514.5" y="507">36</text><text x="584.5" y="507">42</text>
    </g>
  </svg>

  <!-- status bar -->
  <div id="status">
    <span style="left:1px;">x=110.363</span>
    <span style="left:102px;">y=51.3184</span>
    <div class="abs" style="left:200px;top:2px;width:1px;height:20px;background:#dcdcdc;"></div>
    <svg class="abs" style="left:624px;top:11px" width="14" height="14" viewBox="0 0 14 14" shape-rendering="crispEdges">
      <g fill="#a8a8a8">
        <rect x="9" y="1" width="3" height="3"/>
        <rect x="5" y="5" width="3" height="3"/><rect x="9" y="5" width="3" height="3"/>
        <rect x="2" y="9" width="2" height="3"/><rect x="5" y="9" width="3" height="3"/><rect x="9" y="9" width="3" height="3"/>
      </g>
    </svg>
  </div>
</div>
</body>
</html>
